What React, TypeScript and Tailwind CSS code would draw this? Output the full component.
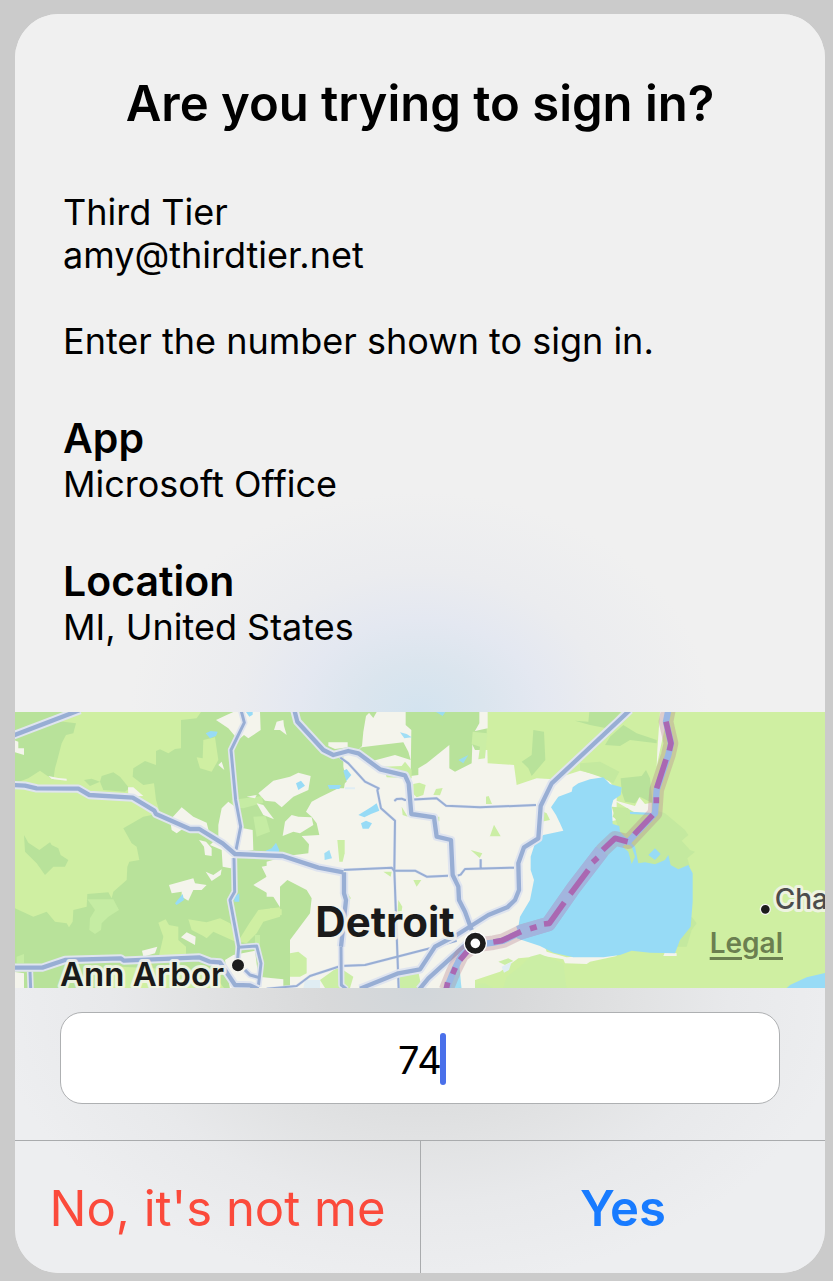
import { useState } from "react";

const MAJOR_ROADS = [
  "M20 114 L240 30",
  "M40 255 L75 257 L110 265 L235 266 L268 285 L398 293 L463 332 L468 342 L570 387 L598 387 L668 430 L705 462 L848 468 L955 503 L1030 517",
  "M40 803 L127 803 L195 780 L362 775 L372 782 L597 772 L630 785 L660 787 L705 855 L750 856 L775 868",
  "M883 30 L892 65 L970 150 L1000 165 L1045 153 L1075 160 L1140 208 L1215 226 L1226 250 L1234 342 L1302 352 L1310 410 L1353 420 L1358 525 L1375 560 L1377 600 L1395 635 L1415 690",
  "M1080 866 L1195 820 L1260 808 L1305 740 L1370 705 L1465 645 L1522 622 L1545 600 L1557 570 L1555 490 L1572 442 L1615 415 L1622 318 L1655 250 L1890 30",
  "M1258 868 L1285 835 L1390 740 L1420 715",
  "M1032 517 L1032 580 L1038 600 L1023 740",
];

const MINOR_ROADS = [
  "M723 30 L733 68 L693 150 L707 300 L722 380 L708 450",
  "M702 474 L704 575 L690 600 L716 740 L712 790",
  "M716 742 L770 738 L783 790 L775 860",
  "M735 810 L750 825 L775 832",
  "M90 815 L92 866",
  "M1023 740 L1024 855 L1040 868",
];

const THIN_ROADS = [
  "M1020 172 L1045 190 L1095 245 L1136 265 L1132 270 L1143 325 L1185 362 L1183 510 L1196 866",
  "M1183 303 L1190 297 L1205 296 L1215 300 L1310 295 L1338 317 L1440 322 L1608 315",
  "M1025 510 L1175 503 L1182 512 L1245 512 L1280 530 L1344 527",
  "M1373 527 L1382 524 L1395 507 L1542 503 M1442 507 V478",
  "M800 866 L890 858 L930 828 L1022 798 L1095 795 L1290 745",
  "M1290 745 L1370 722",
];

const RIVER =
  "M1338 870 L1360 815 L1385 765 L1425 735 L1480 728 L1510 722 L1565 695 L1645 672 L1720 565 L1810 448 L1845 415 L1885 425 L1965 340 L1970 270 L2005 165 L2013 130 L1998 65 L2005 30";

const BORDER_DASHES =
  "M1338 872 L1343 847 M1358 822 L1366 803 M1380 780 L1412 742 M1480 726 L1505 722 L1563 695 M1590 686 L1610 680 M1632 672 L1648 670 L1693 607 M1711 582 L1765 510 M1778 487 L1793 473 M1808 450 L1845 415 L1883 425 M1903 403 L1958 345 M1969 310 V292 M1970 265 L1998 178 M2008 152 L2013 130 L1998 65";

function Roads({ paths, width, halo }: { paths: string[]; width: number; halo: number }) {
  return (
    <g fill="none" strokeLinejoin="round">
      {paths.map((d) => (
        <path key={`halo ${d}`} d={d} stroke="#dfe4ef" strokeWidth={halo} />
      ))}
      {paths.map((d) => (
        <path key={d} d={d} stroke="#98aed4" strokeWidth={width} />
      ))}
    </g>
  );
}

function LocationMap() {
  return (
    <svg
      viewBox="45 36 2430 828"
      preserveAspectRatio="xMidYMid slice"
      className="block h-[276px] w-full"
      role="img"
      aria-label="Detroit"
    >
      <rect x="-1000" y="-1000" width="5000" height="3000" fill="#cfefa2" />

      {/* woodland */}
      <path d="M-1000 0 H1460 V110 L1400 240 L1250 500 L1100 900 H-1000Z" fill="#b8e29a" />

      {/* farmland */}
      <g fill="#cfefa2">
        <path d="M45 250 L85 235 L120 212 L160 240 L165 205 L172 180 L185 130 L198 105 L220 100 L228 70 L165 62 L240 36 L603 36 L590 55 L543 60 L543 145 L525 147 L505 160 L480 148 L468 153 L468 195 L435 183 L400 205 L398 230 L430 255 L462 250 L468 300 L480 340 L430 350 L370 385 L395 430 L410 440 L418 480 L388 485 L382 500 L380 540 L340 575 L335 595 L325 577 L262 582 L260 620 L220 630 L218 665 L207 682 L200 670 L165 665 L140 635 L100 650 L45 625Z" />
        <path d="M590 172 L608 175 L610 120 L645 112 L655 180 L635 215 L600 205Z" />
        <path d="M475 668 L497 658 L507 675 L535 680 L535 720 L558 740 L558 765 L475 775 L490 710Z" />
        <path d="M565 658 L620 667 L660 655 L690 670 L705 695 L720 715 L748 670 L775 630 L840 622 L840 650 L790 665 L770 700 L740 730 L700 722 L640 695 L620 715 L610 708 L575 690Z" />
        <path d="M300 822 L360 800 L460 805 L640 822 L672 864 L300 864Z" />
        <path d="M810 625 L845 628 L845 645 L815 652Z" />
      </g>
      <g fill="#c5eca3">
        <path d="M262 598 L340 598 L357 630 L325 650 L305 670 L303 690 L285 702 L268 690 L270 655 L285 630Z" />
        <path d="M695 300 L785 288 L790 308 L730 325 L695 322Z" />
        <path d="M760 350 L797 348 L810 395 L770 410Z" />
        <path d="M50 770 L72 762 L72 790 L50 790Z M765 705 l15 0 l0 30 l-15 -5Z" />
      </g>
      <g fill="#b8e29a">
        <path d="M252 240 L275 236 L300 245 L305 228 L340 217 L360 230 L388 265 L375 275 L310 270 L300 245 L270 258Z" />
        <path d="M72 405 L85 428 L118 450 L150 427 L155 435 L175 445 L182 465 L205 480 L195 500 L160 500 L135 525 L110 490 L75 455Z" />
      </g>

      {/* built-up areas */}
      <g fill="#f4f4ec">
        <path d="M1030 165 L1075 150 L1086 138 L1090 95 L1098 48 L1110 36 H1463 V85 L1415 95 L1415 130 L1425 150 L1462 150 L1463 190 L1542 195 L1550 255 L1610 235 L1660 238 L1740 212 L1780 222 L1820 235 L1850 270 L1850 360 L1680 400 L1620 700 L1640 755 L1700 772 L1850 762 L1850 768 L1770 785 L1760 792 L1695 790 L1690 778 L1630 768 L1555 775 L1500 815 L1410 845 L1370 866 H870 L870 720 L930 640 L935 595 L920 570 L862 540 L840 560 L830 590 L800 590 L800 485 L860 468 L925 460 L927 433 L905 408 L958 405 L950 370 L935 350 L918 335 L935 305 L960 292 L1015 265 L1040 245 L1030 200Z" />
        <path d="M648 60 L680 45 L700 36 H780 L782 90 L745 115 L732 105 L715 120 L685 85Z" />
        <path d="M822 90 L830 65 L850 60 L852 78 L860 105 L840 90Z" />
        <path d="M985 127 H1043 V142 L1005 147 L985 138Z" />
        <path d="M655 375 L665 325 L685 305 L705 320 L730 385 L758 390 L760 450 L725 455 L710 470 L692 505 L668 500 L665 450 L630 435 L655 410Z" />
        <path d="M775 280 L820 242 L870 230 L895 218 L932 228 L925 270 L880 290 L845 322 L825 305 L795 302Z" />
        <path d="M875 345 L855 365 L848 408 L880 395 L900 400 L940 375 L935 352 L895 350Z" />
        <path d="M510 360 L545 322 L580 350 L620 368 L628 400 L600 385 L560 378 L530 400 L515 390Z" />
        <path d="M597 420 L618 425 L635 445 L635 468 L615 465 L612 440Z" />
        <path d="M507 555 L580 535 L585 550 L620 555 L605 570 L580 570 L565 602 L545 590 L545 575 L515 580Z" />
        <path d="M617 515 L640 525 L665 508 L662 525 L635 543Z" />
        <path d="M543 712 L560 697 L587 710 L585 735 L562 722Z" />
        <path d="M426 752 L472 740 L465 760 L430 770Z" />
        <path d="M770 310 L790 315 L805 335 L822 358 L790 345Z" />
        <path d="M740 290 l30 -5 l-5 10Z" />
        <path d="M655 195 l10 -10 l8 25Z" />
        <path d="M760 555 L800 530 L785 500 L840 490 V622 L820 590 L790 572Z" />
        <path d="M675 780 L700 765 L765 752 L775 830 L850 838 V866 H690Z" />
        <path d="M384 262 L400 262 L430 288 L385 290Z" />
        <path d="M40 120 L55 125 L55 145 L72 145 V165 L40 155Z M40 815 L72 820 V866 H40Z M145 228 l30 6 l25 2 v6 l-45 -5Z" />
      </g>

      {/* woodland and parks inside the built-up areas */}
      <g fill="#b8e29a">
        <path d="M1068 155 L1085 142 L1140 135 L1210 127 L1225 155 L1232 180 L1185 165 L1120 182 L1100 182Z" />
        <path d="M1217 36 H1438 V70 L1418 105 L1415 190 L1365 215 L1348 205 V135 L1280 190 L1255 205 L1255 225 L1232 228 L1234 90 L1217 75Z" />
        <path d="M1600 90 L1632 95 L1636 180 L1595 228 L1585 205 L1565 185 L1595 165Z" />
        <path d="M1768 36 H1862 L1820 85 L1770 75 L1725 62 L1765 65Z" />
        <path d="M1830 110 L1870 75 L1910 100 L1970 120 V130 L1890 120 L1860 138 L1815 135Z" />
        <path d="M1862 235 L1925 228 L1938 210 L1950 235 L1958 310 L1920 290 L1905 310 L1875 305 L1865 275Z" />
        <path d="M1105 36 h25 l-10 18Z M1020 205 l20 10 l-8 50 h-25Z" />
      </g>
      <g fill="#cbeea5">
        <path d="M870 760 L895 755 L920 775 L920 820 L900 830 L870 830Z" />
        <path d="M960 840 L1015 800 L1060 830 L1050 864 H975Z" />
        <path d="M1012 420 h22 v40 l-6 25 h-10Z" />
        <path d="M1150 200 L1205 198 L1215 185 L1235 210 V235 L1160 232Z" />
        <path d="M1240 252 L1258 248 L1277 255 L1270 285 L1250 292 L1240 282Z M1300 285 l8 -18 l20 -3 l-8 22Z M1458 290 l8 -2 l10 24 h-18Z" />
        <path d="M1470 408 l12 -34 l20 35 h-34Z M1240 540 h24 l-14 20Z M1412 450 l35 10 l-8 14Z M1150 515 h25 l-3 15Z" />
        <path d="M1195 600 l12 20 l-5 30 h-10Z M1205 320 l18 30 l-15 -5Z M1195 830 l60 -15 l10 49 h-65Z M1418 95 L1462 100 L1455 175 L1435 178 L1440 140 L1415 132Z" />
        <path d="M1620 330 l20 10 l10 20 l-25 5Z M1043 580 l10 15 l-15 10Z M1310 350 h8 v14 h-8Z" />
        <path d="M1510 864 L1520 830 L1560 800 L1590 770 L1620 762 L1690 790 L1700 870Z M1405 866 L1420 852 L1455 850 L1480 866Z" />
        <path d="M1375 835 L1385 795 L1395 830Z M1495 785 l30 -10 l15 8 l-25 12Z" />
      </g>
      <path
        d="M1740 190 L1800 185 L1858 215 L1840 250 L1800 230 L1740 210Z M1835 320 L1965 330 L1995 340 L2055 390 L2065 405 L2045 422 L2070 450 L2085 455 L2062 475 L2070 500 L2035 510 L1990 500 L1900 490 L1860 400Z M2075 650 l15 20 l-15 20 l-15 50 h-30Z"
        fill="#c4e99f"
      />
      <path
        d="M1840 300 L1905 318 L1918 292 L1935 312 L1955 308 V345 L1900 335Z M1980 36 H2005 L1980 150 L1970 200 L1972 150Z M1995 755 l35 5 v8 h-40Z"
        fill="#f4f4ec"
      />

      {/* lakes */}
      <g fill="#97dbf6">
        <path d="M1653 322 L1668 300 L1675 290 L1715 275 L1718 262 L1735 250 L1770 238 L1810 232 L1830 252 L1865 262 L1862 285 L1840 300 L1835 318 L1838 372 L1858 378 L1860 395 L1905 440 L1915 490 L1935 487 L1965 493 L1995 480 L2005 465 L2012 495 L2035 508 L2065 495 L2078 520 V605 L2072 680 L2040 720 L2025 760 L1950 758 L1895 752 L1860 765 L1810 772 H1720 L1660 758 L1620 738 L1550 715 L1555 680 L1560 650 L1590 600 L1602 540 L1592 510 L1592 470 L1605 430 L1630 405 L1690 392 L1680 370 L1668 345Z" />
        <path d="M2358 866 L2370 855 L2420 832 L2480 818 V866Z" />
        <path d="M617 100 L632 93 L653 95 L648 108 L630 115Z M738 36 h20 v8 l-10 6Z M797 452 L815 445 L828 428 L838 450 L835 458 H800Z M703 590 L718 580 V605 H703Z M525 610 L548 582 L552 600 L530 615Z" />
        <path d="M888 250 l15 -8 l12 15 l-20 13Z M983 255 h40 l-5 12 h-30Z M1030 212 l10 -5 l14 18 l-15 18Z M1075 345 l40 -25 l15 -10 l8 22 l-25 10 l-20 10Z M1083 370 l15 -8 l18 8 l-10 16 h-18Z" />
        <path d="M973 460 l15 -10 l8 25 l-22 5Z M1200 97 l20 5 l15 10 l-22 3Z M1375 180 l30 -15 l-15 25Z M1308 36 h28 l-8 12Z M1375 750 L1405 870 H1345Z" fillOpacity="0.9" />
      </g>
      <path d="M1375 765 L1425 740 L1425 870 H1385Z" fill="#f4f4ec" />
      <path d="M1845 325 L1885 325 L1880 345 L1855 362 L1838 350Z M1868 440 L1885 455 L1895 492 L1905 470 L1895 440 L1880 430Z" fill="#c4e99f" />
      <path d="M1945 465 L1965 445 L1982 462 L1965 480Z M1890 335 L1950 338 L1950 345 L1890 342Z" fill="#97dbf6" />
      <path d="M915 840 h45 v24 h-50Z M1505 800 l30 -15 l-8 25 l-15 8Z M1035 262 h30 v6 h-30Z M1250 660 l15 5 l-10 8Z" fill="#e0edf3" />

      <Roads paths={THIN_ROADS} width={6} halo={9} />
      <Roads paths={MINOR_ROADS} width={9} halo={19} />
      <Roads paths={MAJOR_ROADS} width={13} halo={25} />

      {/* national border along the river */}
      <g fill="none" strokeLinejoin="round">
        <path d={RIVER} stroke="#b5808e" strokeOpacity="0.33" strokeWidth="44" />
        <path d={RIVER} stroke="#9bb7e4" strokeWidth="19" />
        <path d="M1555 699 L1645 672 L1720 565 L1805 454" stroke="#a2b5de" strokeWidth="44" />
        <path d={BORDER_DASHES} stroke="#aa68b2" strokeWidth="17" />
      </g>

      {/* towns */}
      <circle cx="714" cy="796" r="20" fill="#1c1c1c" stroke="#f6f6f0" strokeWidth="4" />
      <circle cx="1426" cy="730" r="35" fill="#fff" />
      <circle cx="1426" cy="730" r="23" fill="#fff" stroke="#1c1c1c" strokeWidth="17" />
      <circle cx="2296" cy="628" r="15" fill="#1c1c1c" stroke="#f6f6f0" strokeWidth="4" />
      <g
        fontFamily="Inter, sans-serif"
        stroke="#f4f4ec"
        strokeOpacity="0.85"
        strokeWidth="18"
        strokeLinejoin="round"
        style={{ paintOrder: "stroke" }}
      >
        <text x="180" y="858" fontSize="99" fontWeight="600" fill="#1a1a1a">Ann Arbor</text>
        <text x="946" y="710" fontSize="126" fontWeight="700" fill="#1a1a1a">Detroit</text>
        <text x="2324" y="627" fontSize="84" fontWeight="500" fill="#4c4c4c">Cha</text>
      </g>
    </svg>
  );
}

export default function App() {
  const [code, setCode] = useState("74");

  return (
    <main className="min-h-screen bg-[#cbcbcb] pt-[14px] pr-2 pb-2 pl-[15px] font-['Inter',sans-serif] text-black">
      <section className="flex flex-col overflow-hidden rounded-[44px] bg-[#f0f0f0]">
        <div className="bg-[radial-gradient(ellipse_290px_220px_at_50%_100%,#d3e3ef_0%,#dbe5ee_22%,#e4e8f1_42%,#ebecef_64%,#f0f0f0_100%)] px-12 pt-[60px] pb-[63px] text-[36px] leading-[43px]">
          <h1 className="text-center text-[49px] leading-[60px] font-semibold">Are you trying to sign in?</h1>
          <div className="mt-[57px]">
            <p>Third Tier</p>
            <p>amy@thirdtier.net</p>
          </div>
          <p className="mt-[43px]">Enter the number shown to sign in.</p>
          <div className="mt-[50px]">
            <h2 className="text-[41px] leading-[50px] font-semibold">App</h2>
            <p>Microsoft Office</p>
          </div>
          <div className="mt-[50px]">
            <h2 className="text-[41px] leading-[50px] font-semibold">Location</h2>
            <p>MI, United States</p>
          </div>
        </div>

        <div className="relative overflow-hidden">
          <LocationMap />
          <a
            href="#legal"
            className="absolute right-[42px] bottom-[28px] text-[28px] leading-[34px] font-semibold text-[#6b7f50] underline decoration-[3px] underline-offset-4"
          >
            Legal
          </a>
        </div>

        <div className="bg-[radial-gradient(ellipse_430px_300px_at_50%_0%,#d1d6da_0%,#d8d9da_22%,#e1e2e3_50%,#e8e9eb_72%,#edeef0_100%)]">
          <div className="px-[45px] pt-6 pb-9">
            <div className="relative">
              <input
                type="text"
                inputMode="numeric"
                aria-label="Number"
                value={code}
                onChange={(e) => setCode(e.target.value)}
                className="block h-[92px] w-full rounded-[22px] border border-[#aeb0b2] bg-white px-6 pt-1 text-center text-[38px] caret-[#4a70ea] outline-none"
              />
              <span className="pointer-events-none absolute top-[21px] left-1/2 ml-5 h-[52px] w-[6px] rounded-full bg-[#4a70ea]" />
            </div>
          </div>
          <div className="grid grid-cols-2 border-t border-[#a9abad] text-[49px] leading-[60px]">
            <button type="button" className="h-[132px] pt-1 text-[#fb4a3b]">
              No, it's not me
            </button>
            <button type="button" className="h-[132px] border-l border-[#a9abad] pt-1 font-semibold text-[#187bff]">
              Yes
            </button>
          </div>
        </div>
      </section>
    </main>
  );
}
